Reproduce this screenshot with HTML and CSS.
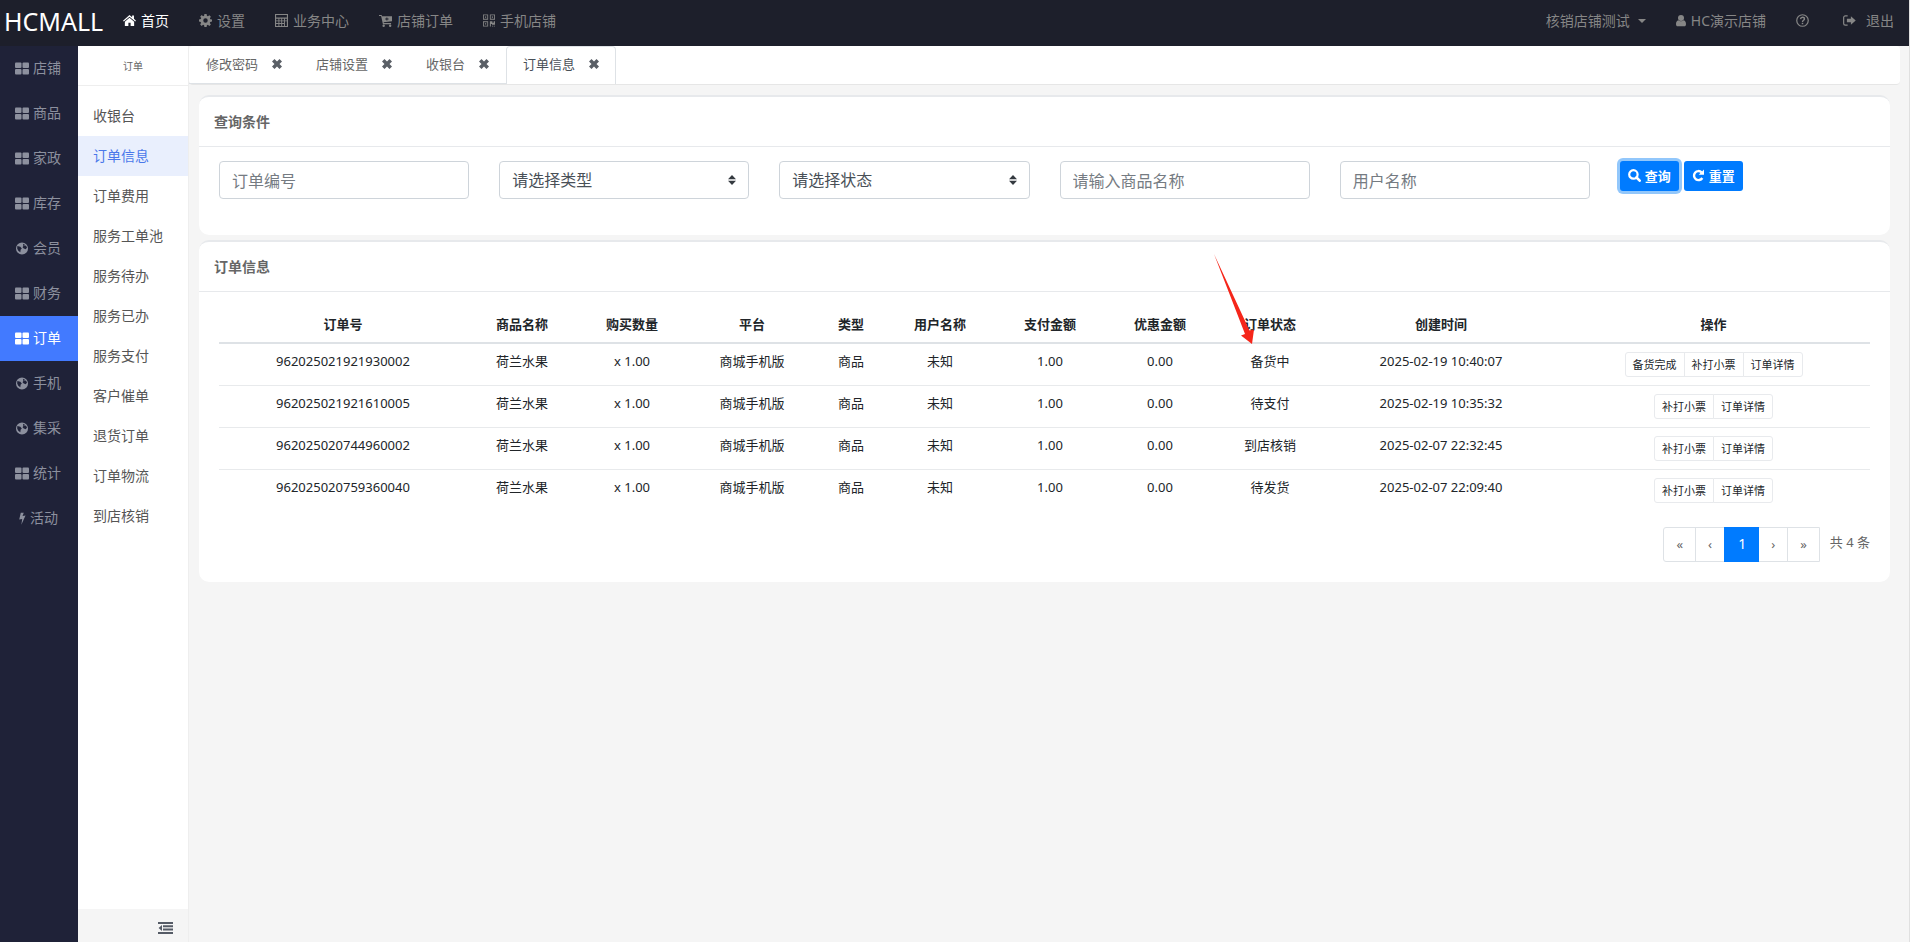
FILE: index.html
```html
<!DOCTYPE html>
<html lang="zh-CN">
<head>
  <meta charset="UTF-8" />
  <meta name="viewport" content="width=device-width, initial-scale=1.0" />
  <title>订单信息</title>
  <link rel="stylesheet" href="styles.css">
</head>
<body>
  <svg class="sprite" aria-hidden="true">
    <symbol id="i-home" viewBox="0 0 14 14"><path d="M7 1L0 7.2l.9 1L7 3l6.100 5.200.9-1L11.800 5.200V1.500H9.800v1.900z"/><path d="M7 4L2 8.300V13h3.800V9.500h2.400V13H12V8.300z"/></symbol>
    <symbol id="i-gear" viewBox="0 0 14 14"><path fill-rule="evenodd" d="M5.800 0h2.400l.3 1.900 1.100.5 1.600-1.100 1.600 1.600-1.100 1.600.5 1.100L14 5.900v2.300l-1.900.3-.5 1.100 1.200 1.600-1.700 1.600-1.500-1.100-1.100.5L8.200 14H5.800l-.3-1.900-1.100-.5-1.600 1.200-1.600-1.700 1.100-1.500-.5-1.100L0 8.200V5.800l1.900-.3.500-1.100-1.200-1.500 1.700-1.700 1.500 1.200 1.100-.5zM7 4.600a2.400 2.400 0 1 0 0 4.800 2.400 2.400 0 0 0 0-4.800z"/></symbol>
    <symbol id="i-calc" viewBox="0 0 14 14"><path fill-rule="evenodd" d="M0 0h14v14H0zM1.200 1.200v2.600h11.600V1.200zM1.200 5v1.900h2.500V5zM4.700 5v1.900h2V5zM7.700 5v1.900h2V5zM10.700 5v1.900h2.100V5zM1.200 7.900v1.900h2.500V7.900zM4.700 7.900v1.900h2V7.900zM7.700 7.900v1.900h2V7.900zM10.700 7.900v4.900h2.100V7.900zM1.200 10.800v2h2.500v-2zM4.700 10.800v2h2v-2zM7.700 10.800v2h2v-2z"/></symbol>
    <symbol id="i-cart" viewBox="0 0 14 14"><path fill-rule="evenodd" d="M0 1h2.800l.5 1.500H14v5.200L5 8.900l.2.900H13v1.200H4.200L2.300 2.200H0zM8 3.700v1.200H6.700v1H8v1.200h1V5.900h1.300v-1H9V3.700z"/><circle cx="5" cy="12.600" r="1.300"/><circle cx="12" cy="12.600" r="1.300"/></symbol>
    <symbol id="i-qr" viewBox="0 0 14 14"><path fill-rule="evenodd" d="M0 0h6v6H0zM1 1v4h4V1zM8 0h6v6H8zM9 1v4h4V1zM0 8h6v6H0zM1 9v4h4V9zM2.300 2.300h1.400v1.400H2.300zM10.300 2.300h1.400v1.400h-1.400zM2.300 10.300h1.400v1.400H2.300zM8 8h3v1.500h1.500V8H14v4h-3.500v-1H9.200v3H8zM10.500 13H12v1h-1.500zM13 13h1v1h-1z"/></symbol>
    <symbol id="i-user" viewBox="1 0 12 14"><circle cx="7" cy="3.900" r="3.600"/><path d="M3.800 6.600C1.800 7 1 9 1 11.500 1 13 1.800 14 3 14h8c1.200 0 2-1 2-2.500 0-2.500-.8-4.500-2.800-4.900C8.500 8.300 5.500 8.300 3.800 6.600z"/></symbol>
    <symbol id="i-help" viewBox="0 0 14 14"><circle cx="7" cy="7" r="6.200" fill="none" stroke="currentColor" stroke-width="1.300"/><path d="M4.900 5.500C5 4 6 3.500 7 3.500c1.200 0 2.100.7 2.100 1.800C9.100 6.800 7 6.800 7 8.500" fill="none" stroke="currentColor" stroke-width="1.500"/><path d="M6.200 9.500h1.600v1.500H6.200z"/></symbol>
    <symbol id="i-exit" viewBox="0 0 14 14"><path d="M5 2H2.500C1.500 2 .7 2.800.7 3.800v6.400c0 1 .8 1.800 1.800 1.800H5" fill="none" stroke="currentColor" stroke-width="1.300"/><path d="M8.500 2.300L13.700 7l-5.200 4.700V9H4.200V5h4.300z"/></symbol>
    <symbol id="i-grid" viewBox="0 0 14 12"><rect width="6.500" height="5.500" rx="1"/><rect x="7.500" width="6.500" height="5.500" rx="1"/><rect y="6.500" width="6.500" height="5.500" rx="1"/><rect x="7.500" y="6.500" width="6.500" height="5.500" rx="1"/></symbol>
    <symbol id="i-globe" viewBox="0 0 14 14"><path fill-rule="evenodd" d="M7 .5a6.500 6.500 0 1 0 0 13 6.500 6.500 0 0 0 0-13zM8 1.900l2.200 1-.9 1.400 1.900-.5 1.200 2.200-1.300 1.800-2.200-.7-1.300-1.500.9-1.300zM2 4.200L5.200 5l1.600 2-1.300 1.300-.3 2.700L3 9.300 1.800 7z"/></symbol>
    <symbol id="i-bolt" viewBox="0 0 8 14"><path d="M2.700.8h3.200L4.600 4.300l3.200-.5L3.300 13.600l.9-6L1 8.200z"/></symbol>
    <symbol id="i-times" viewBox="1 1 8 8"><path d="M1 3l2-2 2 2 2-2 2 2-2 2 2 2-2 2-2-2-2 2-2-2 2-2z"/></symbol>
    <symbol id="i-search" viewBox="0 0 13 13"><circle cx="5.400" cy="5.400" r="4.200" fill="none" stroke="currentColor" stroke-width="2.200"/><path d="M8.500 8.500l3.200 3.200" stroke="currentColor" stroke-width="2.600" stroke-linecap="round"/></symbol>
    <symbol id="i-redo" viewBox="0 0 13 13"><path d="M10.300 9A4.500 4.500 0 1 1 9.600 3.300" fill="none" stroke="currentColor" stroke-width="2.400"/><path d="M12 .5v5.300H6.700z"/></symbol>
    <symbol id="i-outdent" viewBox="0 0 15 12"><path d="M0 0h15v2H0zM5 3.300h10v2H5zM5 6.600h10v2H5zM0 10h15v2H0zM4 3v6L.6 6z"/></symbol>
    <symbol id="i-sort" viewBox="0 0 8 10"><path d="M4 0l4 4.200H0zM4 10l4-4.200H0z"/></symbol>
  </svg>

  <header class="topbar">
    <a class="logo" href="#">HCMALL</a>
    <nav class="topnav">
      <a class="active" href="#"><svg class="icon"><use href="#i-home"/></svg>首页</a>
      <a href="#"><svg class="icon"><use href="#i-gear"/></svg>设置</a>
      <a href="#"><svg class="icon"><use href="#i-calc"/></svg>业务中心</a>
      <a href="#"><svg class="icon"><use href="#i-cart"/></svg>店铺订单</a>
      <a href="#"><svg class="icon icon-qr"><use href="#i-qr"/></svg>手机店铺</a>
    </nav>
    <nav class="topnav topnav-right">
      <a href="#">核销店铺测试<span class="caret"></span></a>
      <a href="#"><svg class="icon icon-user"><use href="#i-user"/></svg>HC演示店铺</a>
      <a href="#" aria-label="帮助"><svg class="icon"><use href="#i-help"/></svg></a>
      <a class="logout" href="#"><svg class="icon"><use href="#i-exit"/></svg>退出</a>
    </nav>
  </header>

  <div class="layout">
    <nav class="sidebar">
      <a href="#"><svg class="icon"><use href="#i-grid"/></svg>店铺</a>
      <a href="#"><svg class="icon"><use href="#i-grid"/></svg>商品</a>
      <a href="#"><svg class="icon"><use href="#i-grid"/></svg>家政</a>
      <a href="#"><svg class="icon"><use href="#i-grid"/></svg>库存</a>
      <a href="#"><svg class="icon"><use href="#i-globe"/></svg>会员</a>
      <a href="#"><svg class="icon"><use href="#i-grid"/></svg>财务</a>
      <a class="active" href="#"><svg class="icon"><use href="#i-grid"/></svg>订单</a>
      <a href="#"><svg class="icon"><use href="#i-globe"/></svg>手机</a>
      <a href="#"><svg class="icon"><use href="#i-globe"/></svg>集采</a>
      <a href="#"><svg class="icon"><use href="#i-grid"/></svg>统计</a>
      <a href="#"><svg class="icon icon-bolt"><use href="#i-bolt"/></svg>活动</a>
    </nav>

    <div class="submenu">
      <div class="submenu-title">订单</div>
      <nav class="submenu-list">
        <a href="#">收银台</a>
        <a class="active" href="#">订单信息</a>
        <a href="#">订单费用</a>
        <a href="#">服务工单池</a>
        <a href="#">服务待办</a>
        <a href="#">服务已办</a>
        <a href="#">服务支付</a>
        <a href="#">客户催单</a>
        <a href="#">退货订单</a>
        <a href="#">订单物流</a>
        <a href="#">到店核销</a>
      </nav>
      <div class="submenu-foot">
        <button type="button" aria-label="收起菜单"><svg><use href="#i-outdent"/></svg></button>
      </div>
    </div>

    <main class="main">
      <div class="tabs">
        <div class="tab"><a href="#">修改密码</a><button type="button" aria-label="关闭"><svg><use href="#i-times"/></svg></button></div>
        <div class="tab"><a href="#">店铺设置</a><button type="button" aria-label="关闭"><svg><use href="#i-times"/></svg></button></div>
        <div class="tab"><a href="#">收银台</a><button type="button" aria-label="关闭"><svg><use href="#i-times"/></svg></button></div>
        <div class="tab active"><a href="#">订单信息</a><button type="button" aria-label="关闭"><svg><use href="#i-times"/></svg></button></div>
      </div>

      <section class="card">
        <h2>查询条件</h2>
        <form class="search">
          <input type="text" placeholder="订单编号" aria-label="订单编号">
          <div class="select">
            <select aria-label="类型"><option>请选择类型</option></select>
            <svg><use href="#i-sort"/></svg>
          </div>
          <div class="select">
            <select aria-label="状态"><option>请选择状态</option></select>
            <svg><use href="#i-sort"/></svg>
          </div>
          <input type="text" placeholder="请输入商品名称" aria-label="商品名称">
          <input type="text" placeholder="用户名称" aria-label="用户名称">
          <div class="search-btns">
            <button class="focus" type="button"><svg><use href="#i-search"/></svg>查询</button>
            <button type="button"><svg><use href="#i-redo"/></svg>重置</button>
          </div>
        </form>
      </section>

      <section class="card">
        <h2>订单信息</h2>
        <div class="card-body">
          <table class="orders">
            <colgroup>
              <col class="w-no"><col class="w-name"><col class="w-name"><col class="w-plat"><col class="w-type"><col class="w-name"><col class="w-name"><col class="w-name"><col class="w-name"><col class="w-time"><col class="w-op">
            </colgroup>
            <thead>
              <tr>
                <th>订单号</th><th>商品名称</th><th>购买数量</th><th>平台</th><th>类型</th><th>用户名称</th><th>支付金额</th><th>优惠金额</th>
                <th class="marked">订单状态
                  <!-- red pointer to the first status -->
                  <svg class="pointer" viewBox="0 0 42 92"><path d="M2 1L37.500 77.500l4.500-1-2 14.500-11-8.500 4-1.500z"/></svg>
                </th>
                <th>创建时间</th><th>操作</th>
              </tr>
            </thead>
            <tbody>
              <tr>
                <td>962025021921930002</td><td>荷兰水果</td><td>x 1.00</td><td>商城手机版</td><td>商品</td><td>未知</td><td>1.00</td><td>0.00</td><td>备货中</td><td>2025-02-19 10:40:07</td>
                <td><div class="btn-group"><button type="button">备货完成</button><button type="button">补打小票</button><button type="button">订单详情</button></div></td>
              </tr>
              <tr>
                <td>962025021921610005</td><td>荷兰水果</td><td>x 1.00</td><td>商城手机版</td><td>商品</td><td>未知</td><td>1.00</td><td>0.00</td><td>待支付</td><td>2025-02-19 10:35:32</td>
                <td><div class="btn-group"><button type="button">补打小票</button><button type="button">订单详情</button></div></td>
              </tr>
              <tr>
                <td>962025020744960002</td><td>荷兰水果</td><td>x 1.00</td><td>商城手机版</td><td>商品</td><td>未知</td><td>1.00</td><td>0.00</td><td>到店核销</td><td>2025-02-07 22:32:45</td>
                <td><div class="btn-group"><button type="button">补打小票</button><button type="button">订单详情</button></div></td>
              </tr>
              <tr>
                <td>962025020759360040</td><td>荷兰水果</td><td>x 1.00</td><td>商城手机版</td><td>商品</td><td>未知</td><td>1.00</td><td>0.00</td><td>待发货</td><td>2025-02-07 22:09:40</td>
                <td><div class="btn-group"><button type="button">补打小票</button><button type="button">订单详情</button></div></td>
              </tr>
            </tbody>
          </table>
          <div class="pager">
            <nav class="pages">
              <a href="#">«</a><a href="#">‹</a><a class="active" href="#">1</a><a href="#">›</a><a href="#">»</a>
            </nav>
            <span>共 4 条</span>
          </div>
        </div>
      </section>
    </main>
  </div>
</body>
</html>
```

FILE: styles.css
```css
* {
  box-sizing: border-box;
}

body {
  margin: 0;
  min-height: 100vh;
  display: flex;
  flex-direction: column;
  font-family: "Noto Sans", "Noto Sans CJK SC", sans-serif;
  font-size: 14px;
  line-height: 20px;
  color: #666;
  background: #f5f5f5;
  border-right: 1px solid #e0e0e0;
}

a {
  color: inherit;
  text-decoration: none;
}

button, input, select {
  font-family: inherit;
  margin: 0;
}

button {
  cursor: pointer;
}

svg {
  fill: currentColor;
  flex: none;
}

.sprite {
  position: absolute;
  width: 0;
  height: 0;
}

.icon {
  width: 13px;
  height: 13px;
}

/* top bar */
.topbar {
  display: flex;
  align-items: center;
  justify-content: space-between;
  height: 46px;
  padding-bottom: 5px;
  background: #1d1f2b;
  color: #868686;
}

.logo {
  width: 108px;
  padding-left: 4px;
  font-size: 25px;
  line-height: 36px;
  color: #fff;
}

.topnav {
  display: flex;
  flex: 1;
}

.topnav a {
  display: flex;
  align-items: center;
  gap: 5px;
  padding: 0 15px;
}

.topnav .active {
  color: #fff;
}

.topnav .icon-qr {
  width: 12px;
}

.topnav .icon-user {
  width: 10px;
}

.topnav-right {
  justify-content: flex-end;
}

.topnav-right .logout {
  gap: 10px;
  margin-left: 4px;
}

.caret {
  margin-left: 3px;
  border: 4px solid transparent;
  border-top-color: currentColor;
  border-bottom: 0;
}

.layout {
  display: flex;
  flex: 1;
}

/* sidebar */
.sidebar {
  width: 78px;
  flex: none;
  background: #1f2238;
  color: #8c909e;
}

.sidebar a {
  display: flex;
  align-items: center;
  justify-content: center;
  gap: 4px;
  height: 45px;
  padding: 0 2px 1px 0;
}

.sidebar .active {
  background: #427aff;
  color: #fff;
}

.sidebar .icon {
  width: 14px;
}

.sidebar .icon-bolt {
  width: 8px;
}

/* second level menu */
.submenu {
  display: flex;
  flex-direction: column;
  width: 111px;
  flex: none;
  background: #fff;
  border-right: 1px solid #eee;
}

.submenu-title {
  height: 40px;
  font-size: 10px;
  line-height: 40px;
  text-align: center;
  border-bottom: 1px solid #eee;
}

.submenu-list {
  flex: 1;
  padding-top: 10px;
}

.submenu-list a {
  display: block;
  height: 40px;
  padding: 0 15px;
  line-height: 39px;
  color: #555;
}

.submenu-list .active {
  background: #e9effd;
  color: #4a78ea;
}

.submenu-foot {
  display: flex;
  justify-content: flex-end;
  height: 33px;
  padding: 5px 15px 0 0;
  background: #f5f5f5;
}

.submenu-foot button {
  display: flex;
  align-items: center;
  padding: 0;
  border: 0;
  background: none;
  color: #555b66;
}

.submenu-foot svg {
  width: 15px;
  height: 12px;
}

.main {
  flex: 1;
  min-width: 0;
  padding-right: 9px;
}

/* open pages */
.tabs {
  display: flex;
  height: 39px;
  margin-bottom: 10px;
  background: #fff;
  border-bottom: 1px solid #e6e6e6;
  border-radius: 4px;
}

.tab {
  display: flex;
  align-items: center;
  gap: 14px;
  padding: 0 17px 1px;
  font-size: 13px;
  border-bottom: 1px solid #dee2e6;
}

.tab button {
  display: flex;
  padding: 0;
  border: 0;
  background: none;
  color: #5a5f66;
}

.tab svg {
  width: 10px;
  height: 10px;
}

.tab.active {
  padding: 0 16px 3px;
  color: #495057;
  border: 1px solid #dee2e6;
  border-bottom: 0;
  border-radius: 4px 4px 0 0;
}

.card {
  margin: 0 10px 5px;
  background: #fff;
  border-top: 2px solid #e7e9ec;
  border-radius: 10px;
}

.card h2 {
  margin: 0;
  padding: 1px 15px 0;
  font-size: 14px;
  font-weight: 700;
  line-height: 48px;
  border-bottom: 1px solid #e7e9ec;
}

/* query form */
.search {
  display: grid;
  grid-template-columns: repeat(6, 1fr);
  gap: 30px;
  padding: 14px 20px 36px;
}

.search input, .search select {
  width: 100%;
  height: 38px;
  padding: 0 12px;
  font-size: 16px;
  color: #495057;
  background: #fff;
  border: 1px solid #ced4da;
  border-radius: 4px;
}

.search input {
  padding-top: 2px;
}

.search input::placeholder {
  color: #757b82;
}

.search select {
  appearance: none;
}

.select {
  position: relative;
}

.select svg {
  position: absolute;
  top: 14px;
  right: 13px;
  width: 8px;
  height: 10px;
  color: #343a40;
  pointer-events: none;
}

.search-btns {
  display: flex;
  align-items: flex-start;
  gap: 5px;
}

.search-btns button {
  display: flex;
  align-items: center;
  gap: 4px;
  height: 30px;
  padding: 0 8px 1px;
  font-size: 13px;
  font-weight: 700;
  color: #fff;
  background: #007bff;
  border: 0;
  border-radius: 3px;
}

.search-btns svg {
  width: 13px;
  height: 13px;
}

.search-btns .focus {
  box-shadow: 0 0 0 3px #92c7fb;
}

/* order table */
.card-body {
  padding: 15px 20px 20px;
}

.orders {
  width: 100%;
  table-layout: fixed;
  border-spacing: 0;
  font-size: 13px;
  text-align: center;
  color: #212529;
}

.w-no { width: 248px; }
.w-name { width: 110px; }
.w-plat { width: 130px; }
.w-type { width: 68px; }
.w-time { width: 232px; }
.w-op { width: 313px; }

.orders th {
  height: 37px;
  padding: 0 0 2px;
  font-weight: 700;
  border-bottom: 2px solid #dee2e6;
}

.orders td {
  height: 42px;
  padding: 7px 0 0;
  vertical-align: top;
  border-bottom: 1px solid #e8eaec;
}

.orders tr:last-child td {
  height: 41px;
  border-bottom: 0;
}

.marked {
  position: relative;
}

.pointer {
  position: absolute;
  left: -3px;
  bottom: -3px;
  width: 42px;
  height: 92px;
  color: #f5261a;
}

.btn-group {
  display: flex;
  justify-content: center;
  padding-top: 1px;
}

.btn-group button {
  height: 25px;
  padding: 0 7px 2px;
  font-size: 11px;
  color: #212529;
  background: #fff;
  border: 1px solid #e8eaed;
}

.btn-group button + button {
  margin-left: -1px;
}

.btn-group button:first-child {
  border-radius: 3px 0 0 3px;
}

.btn-group button:last-child {
  border-radius: 0 3px 3px 0;
}

.pager {
  display: flex;
  justify-content: flex-end;
  gap: 10px;
  margin-top: 16px;
  font-size: 13px;
  line-height: 30px;
}

.pages {
  display: flex;
  height: 35px;
  border: 1px solid #dee2e6;
  border-radius: 3px 0 0 3px;
}

.pages a {
  padding: 0 12px;
  line-height: 33px;
  border-left: 1px solid #dee2e6;
}

.pages a:first-child,
.pages .active + a {
  border-left: 0;
}

.pages .active {
  margin: -1px 0;
  padding: 0 13px;
  font-size: 14px;
  color: #fff;
  background: #007bff;
  border-color: #007bff;
}
```
